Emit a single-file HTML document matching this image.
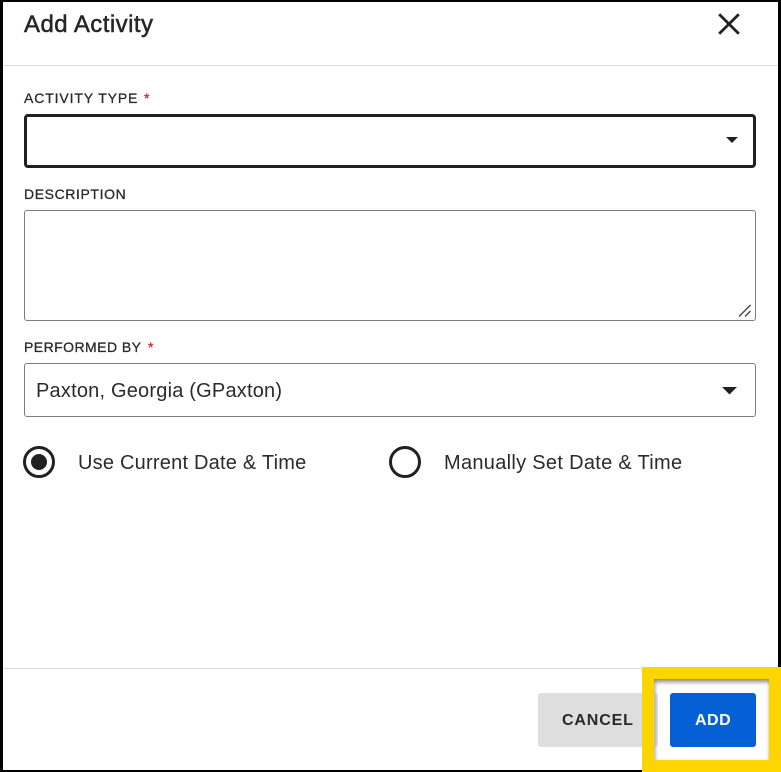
<!DOCTYPE html>
<html>
<head>
<meta charset="utf-8">
<style>
html,body{margin:0;padding:0;background:#fff}
body{position:relative;width:781px;height:772px;overflow:hidden;font-family:"Liberation Sans",Arial,sans-serif;color:#212121}
.a{position:absolute;box-sizing:border-box}
.t{position:absolute;white-space:nowrap;line-height:1}
.lab{font-size:14px;color:#2a2a2a;-webkit-text-stroke:.3px #2a2a2a}
.big{font-size:20px;color:#2b2b2b}
</style>
</head>
<body>
<div class="a" style="left:0;top:0;width:781px;height:2px;background:#000"></div>
<div class="a" style="left:0;top:0;width:3px;height:772px;background:#000"></div>
<div class="a" style="left:778px;top:0;width:3px;height:772px;background:#000"></div>
<div class="a" style="left:0;top:770px;width:781px;height:2px;background:#000"></div>

<div class="t" style="left:24px;top:13px;font-size:24px;letter-spacing:.45px;color:#262626;-webkit-text-stroke:.5px #262626">Add Activity</div>
<svg class="a" style="left:716px;top:11px" width="26" height="26" viewBox="0 0 26 26"><path d="M3.2 3.2L22.8 22.8M22.8 3.2L3.2 22.8" stroke="#212121" stroke-width="2.8" fill="none"/></svg>
<div class="a" style="left:3px;top:65px;width:775px;height:1px;background:#dcdcdc"></div>

<div class="t lab" style="left:24px;top:91px;letter-spacing:.87px">ACTIVITY TYPE</div>
<div class="t lab" style="left:144px;top:91px;color:#d9283c;-webkit-text-stroke:.3px #d9283c">*</div>
<div class="a" style="left:24px;top:114px;width:732px;height:54px;border:3px solid #212121;border-radius:4px;background:#fff"></div>
<svg class="a" style="left:726px;top:137px" width="12" height="6"><path d="M0 0H12L6 6Z" fill="#212121"/></svg>

<div class="t lab" style="left:24px;top:187px;letter-spacing:.6px">DESCRIPTION</div>
<div class="a" style="left:24px;top:210px;width:732px;height:111px;border:1px solid #7c7c7c;border-radius:3px;background:#fff"></div>
<svg class="a" style="left:738px;top:304px" width="14" height="14"><path d="M1 12.5L12.5 1M7 12.5L12.5 7" stroke="#444" stroke-width="1.4" fill="none"/></svg>

<div class="t lab" style="left:24px;top:340px;letter-spacing:.45px">PERFORMED BY</div>
<div class="t lab" style="left:148px;top:340px;color:#d9283c;-webkit-text-stroke:.3px #d9283c">*</div>
<div class="a" style="left:24px;top:363px;width:732px;height:54px;border:1px solid #7c7c7c;border-radius:3px;background:#fff"></div>
<div class="t big" style="left:36px;top:381px;letter-spacing:.2px">Paxton, Georgia (GPaxton)</div>
<svg class="a" style="left:722px;top:387px" width="15" height="8"><path d="M0 0H15L7.5 7.5Z" fill="#212121"/></svg>

<div class="a" style="left:23px;top:446px;width:32px;height:32px;border:3px solid #212121;border-radius:50%"></div>
<div class="a" style="left:31px;top:454px;width:16px;height:16px;background:#212121;border-radius:50%"></div>
<div class="t big" style="left:78px;top:453px;letter-spacing:.22px">Use Current Date &amp; Time</div>
<div class="a" style="left:389px;top:446px;width:32px;height:32px;border:3px solid #212121;border-radius:50%"></div>
<div class="t big" style="left:444px;top:453px;letter-spacing:.3px">Manually Set Date &amp; Time</div>

<div class="a" style="left:3px;top:668px;width:639px;height:1px;background:#dcdcdc"></div>

<div class="a" style="left:538px;top:693px;width:120px;height:54px;background:#dedede;border-radius:3px"></div>
<div class="t" style="left:562px;top:713px;font-size:16px;font-weight:700;letter-spacing:.85px;color:#2a2a2a">CANCEL</div>

<div class="a" style="left:670px;top:693px;width:86px;height:54px;background:#0560d6;border-radius:3px"></div>
<div class="t" style="left:695px;top:713px;font-size:16px;font-weight:700;letter-spacing:.5px;color:#fff">ADD</div>

<div class="a" style="left:654px;top:679px;width:115px;height:81px;box-shadow:inset 0 5px 4px -2px #8a8a8a,inset 4px 0 4px -3px #aaa,inset -2px 0 3px -2px #ccc"></div>

<div class="a" style="left:642px;top:667px;width:139px;height:12px;background:#ffd500"></div>
<div class="a" style="left:642px;top:760px;width:139px;height:12px;background:#ffd500"></div>
<div class="a" style="left:642px;top:667px;width:12px;height:105px;background:#ffd500"></div>
<div class="a" style="left:769px;top:667px;width:12px;height:105px;background:#ffd500"></div>
</body>
</html>
